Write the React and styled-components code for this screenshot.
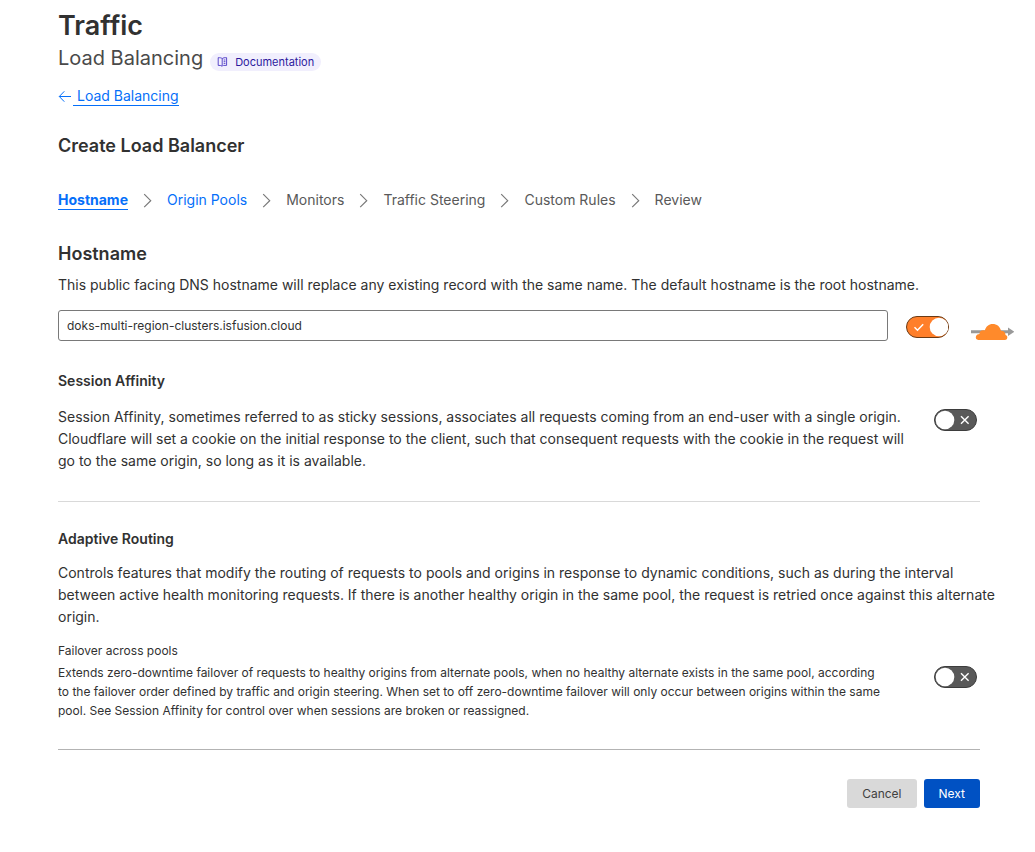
import React, { useState } from 'react';
import styled, { createGlobalStyle } from 'styled-components';

const GlobalStyle = createGlobalStyle`
  *, *::before, *::after { box-sizing: border-box; }
  body {
    margin: 0;
    background: #fff;
    color: #313131;
    font-family: Inter, "Liberation Sans", sans-serif;
    font-size: 14px;
    line-height: 22px;
  }
  h1, h2, h3, h4, p, ol { margin: 0; padding: 0; }
  button, input { font-family: inherit; }
`;

const Page = styled.main`
  padding: 9px 55px 44px 58px;
`;

const Title = styled.h1`
  font-size: 27px;
  line-height: 34px;
  font-weight: 600;
`;

const SubtitleRow = styled.div`
  display: flex;
  align-items: center;
  gap: 7px;
  height: 30px;
`;

const Subtitle = styled.p`
  font-size: 20px;
  line-height: 30px;
  color: #4a4a4a;
`;

const DocLink = styled.a`
  display: inline-flex;
  align-items: center;
  gap: 7px;
  height: 18px;
  margin-top: 8px;
  padding: 0 7px;
  border-radius: 9px;
  background: #f1effd;
  color: #2c1a9e;
  font-size: 11px;
  line-height: 18px;
  text-decoration: none;
`;

const BackRow = styled.nav`
  display: flex;
  align-items: center;
  margin-top: 13px;
  color: #056ff9;
`;

const BackLink = styled.a`
  padding-left: 4px;
  border-bottom: 1px solid #056ff9;
  color: inherit;
  line-height: 19px;
  text-decoration: none;
`;

const PageHeading = styled.h2`
  margin-top: 26px;
  font-size: 18px;
  line-height: 28px;
  font-weight: 600;
`;

const Steps = styled.ol`
  display: flex;
  align-items: center;
  flex-wrap: wrap;
  gap: 15px;
  margin-top: 29px;
  list-style: none;
`;

const Step = styled.li`
  display: flex;
  align-items: center;
  gap: 15px;
  color: #595959;
`;

const StepLink = styled.a`
  color: #056ff9;
  line-height: 19px;
  text-decoration: none;
  font-weight: ${(p) => (p.$current ? 700 : 400)};
  border-bottom: 1px solid ${(p) => (p.$current ? '#056ff9' : 'transparent')};
`;

const SectionHeading = styled.h3`
  margin-top: 29px;
  font-size: 18px;
  line-height: 28px;
  font-weight: 600;
`;

const Label = styled.label`
  display: block;
  margin-top: 6px;
`;

const HostRow = styled.div`
  display: flex;
  align-items: center;
  margin: 14px -34px 0 0;
`;

const HostInput = styled.input`
  flex: 1;
  min-width: 0;
  height: 31px;
  margin-right: 18px;
  padding: 0 8px;
  border: 1px solid #797979;
  border-radius: 3px;
  background: #fff;
  color: #313131;
  font-size: 12px;
`;

const ProxyCloud = styled.svg`
  flex: none;
  margin: 13px 0 0 22px;
`;

const SubHeading = styled.h4`
  margin-top: ${(p) => p.$gap}px;
  font-size: 14px;
  line-height: 22px;
  font-weight: 600;
`;

const SettingRow = styled.div`
  display: flex;
  justify-content: space-between;
  align-items: flex-start;
  gap: 24px;
  margin-top: ${(p) => p.$gap}px;
  padding-right: 3px;
`;

const Paragraph = styled.p``;

const WideParagraph = styled.p`
  margin: 12px -20px 0 0;
`;

const Small = styled.p`
  font-size: 12px;
  line-height: 19px;
`;

const SmallTitle = styled(Small)`
  margin-top: 13px;
`;

const Rule = styled.hr`
  height: 1px;
  margin: 29px 0 0;
  border: 0;
  background: ${(p) => p.$color};
`;

const Switch = styled.label`
  position: relative;
  display: block;
  flex: none;
  width: 43px;
  height: 22px;
  margin-top: 3px;
  border: 1px solid ${(p) => (p.$on ? '#6b3a14' : '#3d3d3d')};
  border-radius: 11px;
  background: ${(p) => (p.$on ? '#ff7f2a' : '#595959')};
  cursor: pointer;

  input {
    position: absolute;
    inset: 0;
    width: 100%;
    height: 100%;
    margin: 0;
    opacity: 0;
    cursor: pointer;
  }
  svg { display: block; }
`;

const Actions = styled.div`
  display: flex;
  justify-content: flex-end;
  gap: 7px;
  margin-top: 29px;
`;

const Button = styled.button`
  height: 29px;
  padding: 0 15px;
  border: 0;
  border-radius: 3px;
  background: ${(p) => (p.$primary ? '#0051c3' : '#d9d9d9')};
  color: ${(p) => (p.$primary ? '#fff' : '#404040')};
  font-size: 12px;
  cursor: pointer;
`;

function Toggle({ label, initial }) {
  const [on, setOn] = useState(initial);
  return (
    <Switch $on={on}>
      <input type="checkbox" role="switch" aria-label={label} checked={on} onChange={() => setOn(!on)} />
      <svg width="41" height="20" viewBox="0 0 41 20" fill="none" aria-hidden="true">
        <circle cx={on ? 32 : 10} cy="10" r="9.3" fill="#fff" />
        {on ? (
          <path d="M7.500 10.300l3 3L16.200 7.300" stroke="#fff" strokeWidth="1.500" />
        ) : (
          <path d="M26 6.200l7.600 7.600M33.600 6.200l-7.600 7.600" stroke="#fff" strokeWidth="1.400" />
        )}
      </svg>
    </Switch>
  );
}

const BookIcon = () => (
  <svg width="11" height="10" viewBox="0 0 11 10" fill="none" stroke="#4a36c4" strokeWidth="0.900" aria-hidden="true">
    <path d="M5.200 1.600C4.200.8 3 .6 1.200.7v7.700c1.800-.1 3 .1 4 .8M5.200 1.600v7.600M5.200 1.600C6.200.8 7.600.6 9.600.7v7.700H6.200M6.700 3h1.700M6.700 4.700h1.700M6.700 6.400h1.700" />
  </svg>
);

const ArrowIcon = () => (
  <svg width="15" height="12" viewBox="0 0 15 12" fill="none" stroke="currentColor" aria-hidden="true">
    <path d="M13 6.500H1.300M6.300 1.300l-5 5.200 5 5.200" />
  </svg>
);

const Chevron = () => (
  <svg width="9" height="16" viewBox="0 0 9 16" fill="none" stroke="#797979" strokeWidth="1.200" aria-hidden="true">
    <path d="M1.200 2.200L7.700 8.700l-6.500 6.500" />
  </svg>
);

const steps = [
  { name: 'Hostname', href: '#hostname', current: true },
  { name: 'Origin Pools', href: '#origin-pools' },
  { name: 'Monitors' },
  { name: 'Traffic Steering' },
  { name: 'Custom Rules' },
  { name: 'Review' },
];

export default function App() {
  const [host, setHost] = useState('doks-multi-region-clusters.isfusion.cloud');
  return (
    <>
      <GlobalStyle />
      <Page>
        <Title>Traffic</Title>
        <SubtitleRow>
          <Subtitle>Load Balancing</Subtitle>
          <DocLink href="#docs"><BookIcon />Documentation</DocLink>
        </SubtitleRow>
        <BackRow>
          <ArrowIcon />
          <BackLink href="#load-balancing">Load Balancing</BackLink>
        </BackRow>
        <PageHeading>Create Load Balancer</PageHeading>
        <Steps>
          {steps.map((s, i) => (
            <Step key={s.name}>
              {i > 0 && <Chevron />}
              {s.href ? (
                <StepLink href={s.href} $current={s.current} aria-current={s.current ? 'step' : undefined}>{s.name}</StepLink>
              ) : (
                <span>{s.name}</span>
              )}
            </Step>
          ))}
        </Steps>

        <SectionHeading>Hostname</SectionHeading>
        <Label htmlFor="hostname">
          This public facing DNS hostname will replace any existing record with the same name. The default hostname is the root hostname.
        </Label>
        <HostRow>
          <HostInput id="hostname" type="text" value={host} onChange={(e) => setHost(e.target.value)} />
          <Toggle label="Proxy" initial />
          <ProxyCloud width="43" height="18" viewBox="0 0 43 18" aria-hidden="true">
            <path d="M0 7.300h37V4.500l6.300 4.300-6.300 4.300v-2.800H0z" fill="#999" />
            <path d="M7.500 17C5 17 4.400 15 5 13.300c.5-1.500 2-2.200 3.500-2.200-.3-3.100 2.500-4.600 5.300-3.600C15 3.300 18 1 21.500 1c4.500 0 7.500 2.700 8.500 6.800 3 0 4.500 2 4.500 4.100 1.500.5 2 1.500 1.800 2.900C36.100 16.500 35 17 34 17z" fill="#ff8a2b" />
          </ProxyCloud>
        </HostRow>

        <SubHeading $gap={29}>Session Affinity</SubHeading>
        <SettingRow $gap={14}>
          <Paragraph>
            Session Affinity, sometimes referred to as sticky sessions, associates all requests coming from an end-user with a single origin. Cloudflare will set a cookie on the initial response to the client, such that consequent requests with the cookie in the request will go to the same origin, so long as it is available.
          </Paragraph>
          <Toggle label="Session Affinity" initial={false} />
        </SettingRow>
        <Rule $color="#d9d9d9" />

        <SubHeading $gap={26}>Adaptive Routing</SubHeading>
        <WideParagraph>
          Controls features that modify the routing of requests to pools and origins in response to dynamic conditions, such as during the interval<br />
          between active health monitoring requests. If there is another healthy origin in the same pool, the request is retried once against this alternate origin.
        </WideParagraph>
        <SmallTitle>Failover across pools</SmallTitle>
        <SettingRow $gap={3}>
          <Small>
            Extends zero-downtime failover of requests to healthy origins from alternate pools, when no healthy alternate exists in the same pool, according<br />
            to the failover order defined by traffic and origin steering. When set to off zero-downtime failover will only occur between origins within the same<br />
            pool. See Session Affinity for control over when sessions are broken or reassigned.
          </Small>
          <Toggle label="Failover across pools" initial={false} />
        </SettingRow>
        <Rule $color="#b3b3b3" />

        <Actions>
          <Button type="button">Cancel</Button>
          <Button type="button" $primary>Next</Button>
        </Actions>
      </Page>
    </>
  );
}
